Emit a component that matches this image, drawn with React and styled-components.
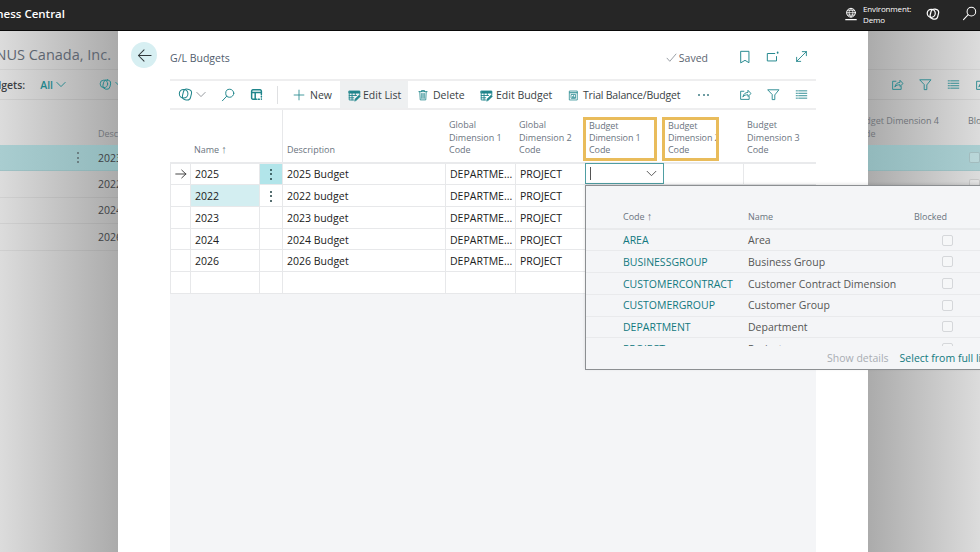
import React from 'react';
import styled, { createGlobalStyle } from 'styled-components';

const TEAL = '#1f858b';
const LINE = '#e7e8ea';
const HEAD_COLS = '20px 69px 24px 162px 70px 70px 79px 79px 73px';
const ROW_COLS = '20px 69px 23px 163px 70px 70px 78px 80px 72px';
const ROW_H = '21.7px';

const GlobalStyle = createGlobalStyle`
  html, body { margin: 0; padding: 0; height: 100%; overflow: hidden; background: #fff; }
  body { font-family: "Open Sans", "Noto Sans", sans-serif; font-size: 10.5px; color: #212121; }
  * { box-sizing: border-box; }
`;

// --- icons --- //
const Glyph = styled.svg.attrs(p => ({
  viewBox: p.$box || '0 0 16 16',
  fill: 'none',
  stroke: 'currentColor',
  strokeWidth: p.$stroke || 1.1,
  strokeLinecap: 'round',
  strokeLinejoin: 'round',
}))`
  width: ${p => p.$size || 14}px;
  height: ${p => p.$h || p.$size || 14}px;
  flex: none;
  display: block;
`;

const Copilot = p => (
  <Glyph {...p}>
    <circle cx="6" cy="7.200" r="4.600" />
    <rect x="5.200" y="2.400" width="8.800" height="11.400" rx="3.800" transform="rotate(14 9.600 8)" />
  </Glyph>
);
const SearchGlyph = p => (
  <Glyph {...p}>
    <circle cx="10" cy="6" r="4.600" />
    <path d="M6.600 9.300 1.600 14.600" />
  </Glyph>
);
const LayoutGlyph = p => (
  <Glyph {...p}>
    <path d="M8 13.800H3.500a1.500 1.500 0 0 1-1.500-1.500V3.700a1.500 1.500 0 0 1 1.500-1.500h9a1.500 1.500 0 0 1 1.500 1.500V8" strokeWidth="1.800" />
    <path d="M2.500 5.600h11M6.400 5.600v8" strokeWidth="1.800" />
    <path d="M10 13.800h1.500M14 10v1.200M14 13.500v.3" strokeWidth="1.800" />
  </Glyph>
);
const Plus = p => (
  <Glyph {...p}>
    <path d="M8 1.500v13M1.500 8h13" />
  </Glyph>
);
const EditGrid = p => (
  <Glyph {...p}>
    <path d="M1.500 2.500h13v2.500h-13z" fill="currentColor" />
    <path d="M7 13.500H1.500V5M14.500 5v2M1.500 8h9M1.500 10.800H7M5 5v8.500M9 5v3" />
    <path d="m8.300 14.500.5-2.300 5-4.700 1.500 1.500-5 4.800z" fill="currentColor" strokeWidth=".8" />
  </Glyph>
);
const Trash = p => (
  <Glyph {...p}>
    <path d="M2.500 3.500h11M6 3.500V2h4v1.500M3.700 3.500l.6 11h7.400l.6-11" />
    <path d="M6.300 6v6.500M8 6v6.500M9.700 6v6.500" />
  </Glyph>
);
const Sheet = p => (
  <Glyph {...p}>
    <path d="M2.500 1.500h11v13h-11z" />
    <path d="M2.500 4h11" strokeWidth="1.600" />
    <path d="M5 6.500h6v5.500H5z" />
    <path d="M6.700 11.500V9.500M8.200 11.500V8M9.700 11.500v-1" />
  </Glyph>
);
const ShareGlyph = p => (
  <Glyph {...p}>
    <path d="M6 4H2v10h10.500v-3.500" />
    <path d="M5 10.500c.4-3.200 2.800-5 6-5V2.800l3.800 4-3.800 3.700V8.300c-2.400 0-4.400.6-6 2.200z" />
  </Glyph>
);
const Funnel = p => (
  <Glyph {...p}>
    <path d="M1.300 2.200h13.400L9.600 8.500v5.800H6.400V8.500z" />
  </Glyph>
);
const ListGlyph = p => (
  <Glyph {...p}>
    <path d="M1.500 3.500h1.500M4.500 3.500h10M1.500 6.500h1.500M4.500 6.500h10M1.500 9.500h1.500M4.500 9.500h10M1.500 12.500h1.500M4.500 12.500h10" />
  </Glyph>
);
const Bookmark = p => (
  <Glyph {...p}>
    <path d="M3.500 1.500h9v13L8 11.800 3.500 14.500z" />
  </Glyph>
);
const OpenNew = p => (
  <Glyph {...p}>
    <path d="M10 4H1.500v8.500h10.500V7.500" />
    <path d="M13.300 2.800v.4" strokeWidth="2" />
  </Glyph>
);
const Expand = p => (
  <Glyph {...p}>
    <path d="M2 14 14 2M9 2h5v5M2 9v5h5" />
  </Glyph>
);
const Globe = p => (
  <Glyph {...p}>
    <circle cx="8" cy="6.500" r="5" />
    <path d="M3 6.500h10M4 3.800h8M4 9.200h8M8 1.500c-3 3-3 7 0 10M8 1.500c3 3 3 7 0 10" strokeWidth=".9" />
    <path d="M2 14.500h12" strokeWidth="1.300" />
  </Glyph>
);
const Check = p => (
  <Glyph {...p}>
    <path d="M1.500 9 5.500 13.500 14.500 3" strokeWidth=".9" />
  </Glyph>
);
const Chevron = p => (
  <Glyph {...p} $box="0 0 12 8">
    <path d="M1 1.500 6 6.500 11 1.500" />
  </Glyph>
);
const ArrowLeft = p => (
  <Glyph {...p}>
    <path d="M15 8H1.500M7.500 2 1.500 8l6 6" />
  </Glyph>
);
const ArrowRight = p => (
  <Glyph {...p}>
    <path d="M1 8h13.500M9 2.800 14.500 8 9 13.200" />
  </Glyph>
);

// --- top bar --- //
const Page = styled.div`
  display: flex;
  flex-direction: column;
  width: 980px;
  height: 552px;
  overflow: hidden;
`;
const TopBar = styled.header`
  display: flex;
  align-items: center;
  flex: none;
  height: 31px;
  background: #262626;
  border-bottom: 1px solid #0a0a0a;
  color: #fff;
`;
const Brand = styled.div`
  display: flex;
  justify-content: flex-end;
  width: 65px;
  overflow: hidden;
  white-space: nowrap;
  font-weight: 600;
  font-size: 11.5px;
  margin-bottom: 3px;
`;
const TopActions = styled.div`
  display: flex;
  align-items: center;
  margin-left: auto;
  padding-right: 3px;
  margin-bottom: 3px;
`;
const EnvText = styled.div`
  font-size: 8px;
  line-height: 11px;
  width: 55px;
  margin-left: 5px;
  margin-right: 8px;
  letter-spacing: -0.15px;
`;
const TopSearch = styled.span`
  margin-left: 22px;
`;

// --- the page behind the dialog --- //
const Body = styled.div`
  flex: 1;
  display: grid;
  grid-template-columns: 118px 750px 1fr;
  min-height: 0;
`;
const Pane = styled.aside`
  overflow: hidden;
  min-width: 0;
  color: #55595e;
  background: linear-gradient(${p => (p.$side === 'left' ? '90deg' : '270deg')}, #dcdcdc, #ababab);
`;
const PaneTitle = styled.div`
  display: flex;
  justify-content: flex-end;
  align-items: center;
  height: 39px;
  padding: 9px 7px 0 0;
  white-space: nowrap;
  font-size: 14.5px;
  color: #5d6570;
  border-bottom: 1px solid rgba(0, 0, 0, 0.05);
`;
const PaneActions = styled.div`
  display: flex;
  align-items: center;
  justify-content: ${p => (p.$side === 'left' ? 'flex-end' : 'flex-start')};
  height: 30px;
  white-space: nowrap;
  padding-left: ${p => (p.$side === 'left' ? 0 : '15px')};
  color: ${TEAL};
  border-bottom: 1px solid rgba(0, 0, 0, 0.06);
`;
const PaneLabel = styled.span`
  color: #3c3f44;
  margin-right: 15px;
  font-weight: 600;
  font-size: 10.5px;
`;
const PaneAll = styled.span`
  font-weight: 600;
  margin-right: 3px;
  font-size: 10.5px;
`;
const PaneDivider = styled.span`
  width: 1px;
  height: 18px;
  margin: 0 17px 0 16px;
  background: rgba(0, 0, 0, 0.08);
`;
const PaneIconSlot = styled.span`
  display: flex;
  justify-content: center;
  flex: none;
  width: 28px;
`;
const PaneClip = styled.span`
  display: block;
  flex: none;
  width: ${p => p.$w}px;
  margin-left: 3px;
  overflow: hidden;
`;
const PaneHead = styled.div`
  display: flex;
  height: 45px;
  padding-top: ${p => (p.$side === 'left' ? '27px' : '14px')};
  padding-left: ${p => (p.$side === 'left' ? '98px' : 0)};
  font-size: 9px;
  line-height: 13px;
  color: #6f7378;
  white-space: nowrap;
`;
const PaneHeadText = styled.span`
  margin-left: -14px;
  width: 114px;
  flex: none;
`;
const PaneRow = styled.div`
  display: grid;
  grid-template-columns: 70px 16px 12px 1fr;
  align-items: center;
  height: 26.400px;
  white-space: nowrap;
  font-size: 10.5px;
  color: #3d4043;
  background: ${p => (p.$selected ? 'linear-gradient(90deg,#a9cdd0,#92b9bc)' : 'transparent')};
  border-bottom: 1px solid rgba(0, 0, 0, 0.05);
`;
const RightRow = styled(PaneRow)`
  display: flex;
  justify-content: flex-end;
  background: ${p => (p.$selected ? 'linear-gradient(270deg,#a9cdd0,#92b9bc)' : 'transparent')};
`;
const Kebab = styled.span`
  display: flex;
  flex-direction: column;
  align-items: center;
  gap: 2.500px;
  & > i {
    display: block;
    width: 2px;
    height: 2px;
    border-radius: 50%;
    background: ${p => (p.$dim ? '#5d6a6c' : '#1f3f42')};
  }
`;
const DimCheck = styled.span`
  display: block;
  width: 11px;
  height: 11px;
  border: 1px solid rgba(0, 0, 0, 0.12);
  border-radius: 2px;
  background: rgba(255, 255, 255, 0.2);
`;

// --- dialog --- //
const Dialog = styled.main`
  display: flex;
  flex-direction: column;
  background: #fff;
  padding: 0 52px;
  min-height: 0;
`;
const DialogHead = styled.div`
  display: flex;
  align-items: center;
  flex: none;
  height: 48px;
  padding-top: 3px;
  padding-right: 1px;
  margin-left: -39px;
`;
const BackButton = styled.button`
  display: flex;
  align-items: center;
  justify-content: center;
  width: 26px;
  height: 26px;
  margin-top: -3px;
  margin-right: 13px;
  padding: 0;
  border: 0;
  border-radius: 50%;
  background: #d7eff2;
  color: #30373a;
`;
const DialogTitle = styled.div`
  font-size: 10.5px;
  color: #505c6d;
  margin-top: 2px;
`;
const SavedState = styled.div`
  display: flex;
  align-items: center;
  gap: 2px;
  margin-left: auto;
  margin-right: 23px;
  margin-top: 2px;
  color: #5b6470;
  font-size: 10.5px;
`;
const TealSlot = styled.span`
  display: flex;
  align-items: center;
  justify-content: center;
  flex: none;
  width: 28px;
  color: ${TEAL};
`;
const Toolbar = styled.div`
  display: flex;
  align-items: center;
  flex: none;
  height: 31px;
  border-top: 2px solid #eeeeef;
  border-bottom: 2px solid #eeeeef;
  padding-right: 1px;
  font-size: 10.5px;
`;
const CopilotGroup = styled.span`
  display: flex;
  align-items: center;
  width: 44px;
  padding-left: 8px;
  gap: 3px;
  color: ${TEAL};
  & > svg:last-child {
    color: #8b9096;
  }
`;
const ToolDivider = styled.span`
  width: 1px;
  height: 18px;
  margin: 0 6px 0 7px;
  background: #dfe0e2;
`;
const ToolButton = styled.div`
  display: flex;
  align-items: center;
  gap: ${p => p.$gap || 4}px;
  width: ${p => p.$w}px;
  height: 100%;
  padding-left: ${p => p.$pad || 9}px;
  padding-top: 1px;
  white-space: nowrap;
  letter-spacing: ${p => p.$tight || 0}px;
  background: ${p => (p.$active ? '#eef0f1' : 'transparent')};
  color: #3a3f45;
  & > svg {
    color: ${TEAL};
  }
`;
const MoreDots = styled.span`
  display: flex;
  gap: 2.500px;
  & > i {
    width: 2px;
    height: 2px;
    border-radius: 50%;
    background: #3f7d85;
  }
`;
const ToolEnd = styled.div`
  display: flex;
  margin-left: auto;
`;

// --- list --- //
const HeadRow = styled.div`
  display: grid;
  grid-template-columns: ${HEAD_COLS};
  flex: none;
  height: 53.600px;
  border-bottom: 2px solid #e9eaec;
`;
const HeadCell = styled.div`
  display: flex;
  align-items: flex-end;
  padding: 0 0 5px ${p => p.$pad ?? 4}px;
  font-size: 9px;
  line-height: 12.500px;
  color: #6b7480;
  border-right: ${p => (p.$rule ? `1px solid ${LINE}` : '0')};
`;
const SortUp = styled.span`
  margin-left: 2px;
  font-size: 11px;
  font-weight: 600;
  line-height: 0;
`;
const HeadLines = styled.span`
  display: block;
  white-space: nowrap;
`;
const Marked = styled.div`
  flex: none;
  width: ${p => p.$w}px;
  height: 44px;
  margin-left: -2px;
  margin-bottom: -4px;
  padding: 0 0 0 3px;
  border: 3px solid #e9bc5b;
  overflow: hidden;
  white-space: nowrap;
  line-height: 12.400px;
  letter-spacing: -0.1px;
`;
const Grid = styled.div`
  flex: 1;
  min-height: 0;
  background: #f4f5f7;
`;
const Row = styled.div`
  display: grid;
  grid-template-columns: ${ROW_COLS};
  height: ${ROW_H};
  background: #fff;
  border-left: 1px solid ${LINE};
  border-bottom: 1px solid ${LINE};
  width: 646px;
  overflow: visible;
`;
const Cell = styled.div`
  display: flex;
  align-items: center;
  min-width: 0;
  padding-left: ${p => p.$pad ?? 4}px;
  padding-top: 1px;
  white-space: nowrap;
  overflow: hidden;
  font-size: 10.5px;
  border-right: ${p => (p.$last ? '0' : `1px solid ${LINE}`)};
  background: ${p => p.$bg || 'transparent'};
  justify-content: ${p => (p.$center ? 'center' : 'flex-start')};
`;
const EditorCell = styled.div`
  position: relative;
  display: flex;
  align-items: center;
  justify-content: space-between;
  margin-top: -1px;
  margin-left: -1px;
  height: ${ROW_H};
  padding: 0 6px 0 4px;
  border: 1px solid #4f9ea3;
  background: #fff;
  color: #555;
  z-index: 2;
`;
const Caret = styled.span`
  width: 1px;
  height: 13px;
  background: #555;
`;

// --- lookup dropdown --- //
const Lookup = styled.div`
  position: absolute;
  top: calc(100% + 2px);
  left: -1px;
  width: 400px;
  height: 185px;
  background: #f4f5f7;
  border: 1px solid #8c8f92;
  box-shadow: 0 -1px 3px rgba(0, 0, 0, 0.12);
  display: flex;
  flex-direction: column;
`;
const LookupHead = styled.div`
  display: grid;
  grid-template-columns: 125px 166px 1fr;
  flex: none;
  height: 43.500px;
  padding: 24px 0 0 37px;
  font-size: 9px;
  color: #6b7480;
  border-bottom: 2px solid #e9eaec;
`;
const LookupList = styled.div`
  flex: none;
  height: 116.500px;
  overflow: hidden;
`;
const LookupRow = styled.div`
  display: grid;
  grid-template-columns: 125px 166px 1fr;
  align-items: center;
  height: ${ROW_H};
  padding-left: 37px;
  font-size: 10.5px;
  white-space: nowrap;
  border-bottom: 1.500px solid #e9eaec;
`;
const CodeLink = styled.span`
  color: #12797f;
`;
const CheckBox = styled.span`
  display: block;
  width: 11px;
  height: 11px;
  margin-left: 28px;
  border: 1px solid #d5d7da;
  border-radius: 2px;
  background: #f6f7f8;
`;
const LookupFoot = styled.div`
  display: flex;
  align-items: center;
  gap: 11px;
  padding: 5px 0 0 241px;
  white-space: nowrap;
  font-size: 10.5px;
`;
const FootMuted = styled.span`
  color: #a9adb3;
`;
const FootLink = styled.span`
  color: #12797f;
`;

const RECORDS = [
  { name: '2025', desc: '2025 Budget' },
  { name: '2022', desc: '2022 budget' },
  { name: '2023', desc: '2023 budget' },
  { name: '2024', desc: '2024 Budget' },
  { name: '2026', desc: '2026 Budget' },
];
const DIMENSIONS = [
  ['AREA', 'Area'],
  ['BUSINESSGROUP', 'Business Group'],
  ['CUSTOMERCONTRACT', 'Customer Contract Dimension'],
  ['CUSTOMERGROUP', 'Customer Group'],
  ['DEPARTMENT', 'Department'],
  ['PROJECT', 'Project'],
];

const Dots = ({ dim }) => (
  <Kebab $dim={dim}>
    <i />
    <i />
    <i />
  </Kebab>
);

const LookupPanel = () => (
  <Lookup>
    <LookupHead>
      <span>Code<SortUp>↑</SortUp></span>
      <span>Name</span>
      <span>Blocked</span>
    </LookupHead>
    <LookupList>
      {DIMENSIONS.map(([code, name]) => (
        <LookupRow key={code}>
          <CodeLink>{code}</CodeLink>
          <span>{name}</span>
          <CheckBox />
        </LookupRow>
      ))}
    </LookupList>
    <LookupFoot>
      <FootMuted>Show details</FootMuted>
      <FootLink>Select from full list</FootLink>
    </LookupFoot>
  </Lookup>
);

export default function App() {
  return (
    <Page>
      <GlobalStyle />
      <TopBar>
        <Brand>Dynamics 365 Business Central</Brand>
        <TopActions>
          <Globe $size={14} />
          <EnvText>
            Environment:
            <br />
            Demo
          </EnvText>
          <Copilot $size={14} $stroke={1.4} />
          <TopSearch>
            <SearchGlyph $size={15} />
          </TopSearch>
        </TopActions>
      </TopBar>

      <Body>
        <Pane $side="left">
          <PaneTitle>CRONUS Canada, Inc.</PaneTitle>
          <PaneActions $side="left">
            <PaneLabel>G/L Budgets:</PaneLabel>
            <PaneAll>All</PaneAll>
            <Chevron $size={10} $h={7} />
            <PaneDivider />
            <Copilot $size={13} />
            <PaneClip $w={3}>
              <Chevron $size={10} $h={7} />
            </PaneClip>
          </PaneActions>
          <PaneHead $side="left">Description</PaneHead>
          <PaneRow $selected>
            <span />
            <Dots dim />
            <span />
            <span>2023 Budget</span>
          </PaneRow>
          {['2022 budget', '2024 Budget', '2026 Budget'].map(text => (
            <PaneRow key={text}>
              <span />
              <span />
              <span />
              <span>{text}</span>
            </PaneRow>
          ))}
        </Pane>

        <Dialog>
          <DialogHead>
            <BackButton>
              <ArrowLeft $size={15} />
            </BackButton>
            <DialogTitle>G/L Budgets</DialogTitle>
            <SavedState>
              <Check $size={11} />
              Saved
            </SavedState>
            <TealSlot><Bookmark $size={14} /></TealSlot>
            <TealSlot><OpenNew $size={14} /></TealSlot>
            <TealSlot><Expand $size={13} /></TealSlot>
          </DialogHead>

          <Toolbar>
            <CopilotGroup>
              <Copilot $size={15} />
              <Chevron $size={10} $h={7} />
            </CopilotGroup>
            <TealSlot><SearchGlyph $size={14} /></TealSlot>
            <TealSlot><LayoutGlyph $size={13} /></TealSlot>
            <ToolDivider />
            <ToolButton $w={56} $gap={5}>
              <Plus $size={12} />
              New
            </ToolButton>
            <ToolButton $w={68} $gap={2} $pad={8} $active>
              <EditGrid $size={13} />
              Edit List
            </ToolButton>
            <ToolButton $w={63} $pad={9}>
              <Trash $size={12} />
              Delete
            </ToolButton>
            <ToolButton $w={88} $gap={3}>
              <EditGrid $size={13} />
              Edit Budget
            </ToolButton>
            <ToolButton $w={131} $pad={9} $gap={4} $tight={-0.2}>
              <Sheet $size={11} />
              Trial Balance/Budget
            </ToolButton>
            <ToolButton $w={27} $pad={8}>
              <MoreDots>
                <i />
                <i />
                <i />
              </MoreDots>
            </ToolButton>
            <ToolEnd>
              <TealSlot><ShareGlyph $size={13} /></TealSlot>
              <TealSlot><Funnel $size={13} /></TealSlot>
              <TealSlot><ListGlyph $size={13} /></TealSlot>
            </ToolEnd>
          </Toolbar>

          <HeadRow>
            <HeadCell />
            <HeadCell><HeadLines>Name<SortUp>↑</SortUp></HeadLines></HeadCell>
            <HeadCell $rule />
            <HeadCell>Description</HeadCell>
            <HeadCell><HeadLines>Global<br />Dimension 1<br />Code</HeadLines></HeadCell>
            <HeadCell><HeadLines>Global<br />Dimension 2<br />Code</HeadLines></HeadCell>
            <HeadCell $pad={0}>
              <Marked $w={74}>Budget<br />Dimension 1<br />Code</Marked>
            </HeadCell>
            <HeadCell $pad={0}>
              <Marked $w={57}>Budget<br />Dimension 2<br />Code</Marked>
            </HeadCell>
            <HeadCell><HeadLines>Budget<br />Dimension 3<br />Code</HeadLines></HeadCell>
          </HeadRow>

          <Grid>
            {RECORDS.map((r, i) => (
              <Row key={r.name}>
                <Cell $center $pad={0}>{i === 0 && <ArrowRight $size={12} />}</Cell>
                <Cell $bg={i === 1 ? '#d3eef1' : undefined}>{r.name}</Cell>
                <Cell $center $pad={0} $bg={i === 0 ? '#b2e5ea' : undefined}>{i < 2 && <Dots />}</Cell>
                <Cell>{r.desc}</Cell>
                <Cell>DEPARTME...</Cell>
                <Cell>PROJECT</Cell>
                {i === 0 ? (
                  <EditorCell>
                    <Caret />
                    <Chevron $size={11} $h={7} />
                    <LookupPanel />
                  </EditorCell>
                ) : (
                  <Cell />
                )}
                <Cell />
                <Cell $last />
              </Row>
            ))}
            <Row>
              {Array.from({ length: 9 }, (_, i) => (
                <Cell key={i} $last={i === 8} />
              ))}
            </Row>
          </Grid>
        </Dialog>

        <Pane $side="right">
          <PaneTitle />
          <PaneActions $side="right">
            <PaneIconSlot><ShareGlyph $size={13} /></PaneIconSlot>
            <PaneIconSlot><Funnel $size={13} /></PaneIconSlot>
            <PaneIconSlot><ListGlyph $size={13} /></PaneIconSlot>
            <PaneIconSlot><ShareGlyph $size={13} /></PaneIconSlot>
          </PaneActions>
          <PaneHead $side="right">
            <PaneHeadText>Budget Dimension 4<br />Code</PaneHeadText>
            Blocked
          </PaneHead>
          <RightRow $selected>
            <DimCheck />
          </RightRow>
          <RightRow>
            <DimCheck />
          </RightRow>
        </Pane>
      </Body>
    </Page>
  );
}
